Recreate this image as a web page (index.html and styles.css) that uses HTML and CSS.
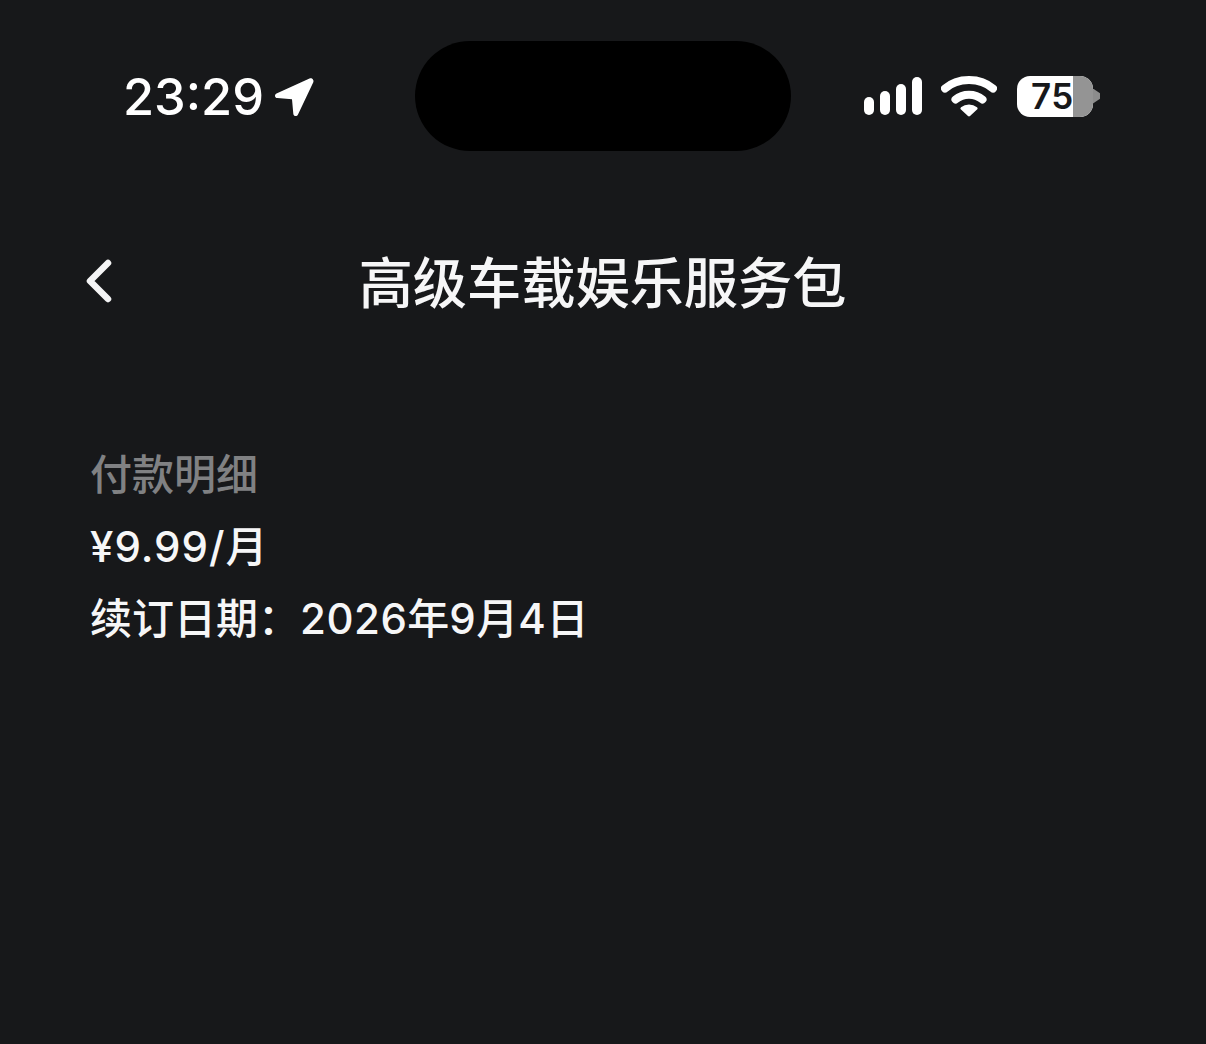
FILE: index.html
```html
<!DOCTYPE html>
<html lang="zh-CN">
<head>
<meta charset="utf-8">
<title>高级车载娱乐服务包</title>
<link rel="stylesheet" href="styles.css">
</head>
<body>
<div class="screen">
  <header class="status">
    <div class="status-left">
      <span class="time">23:29</span>
      <svg class="loc" width="42" height="42" viewBox="0 0 42 42"><path d="M36.500 2.500 3.500 17.500c-2.400 1.100-1.800 4.400.8 4.600l14.700 1.100 1.300 14.500c.2 2.600 3.600 3.200 4.700.8L40.300 6.300c1-2.400-1.500-4.900-3.800-3.800Z" fill="#fff"/></svg>
    </div>
    <div class="island"></div>
    <div class="status-right">
      <svg class="signal" width="58" height="38" viewBox="0 0 58 38"><rect x="0" y="20" width="10" height="18" rx="5"/><rect x="16" y="14" width="10" height="24" rx="5"/><rect x="32" y="7" width="10" height="31" rx="5"/><rect x="48" y="0" width="10" height="38" rx="5"/></svg>
      <svg class="wifi" width="56" height="42" viewBox="0 0 56 42"><path d="M4 13.500C16.500 2 39.500 2 52 13.500" /><path d="M14.500 24.500C22 18 34 18 41.500 24.500"/><path class="wifi-dot" d="M21 33.500C25 30 31 30 35 33.500L28 40Z"/></svg>
      <div class="battery">
        <div class="battery-body"><span class="battery-num">75</span><span class="battery-rest"></span></div>
        <span class="battery-cap"></span>
      </div>
    </div>
  </header>
  <nav class="navbar">
    <svg class="back" width="30" height="46" viewBox="0 0 30 46"><path d="M24 5 6 23l18 18" fill="none" stroke="#f4f4f5" stroke-width="6.500" stroke-linecap="round" stroke-linejoin="round"/></svg>
    <h1 class="title">高级车载娱乐服务包</h1>
  </nav>
  <main class="details">
    <p class="label">付款明细</p>
    <p class="line"><span class="num price">¥9.99/</span>月</p>
    <p class="line">续订日期：<span class="num">2026</span>年<span class="num">9</span>月<span class="num">4</span>日</p>
  </main>
</div>
</body>
</html>
```
FILE: styles.css
```css
* { box-sizing: border-box; }
html, body { margin: 0; padding: 0; }
body {
  width: 1206px;
  height: 1044px;
  overflow: hidden;
  background: #17181a;
  color: #f6f6f7;
  font-family: Inter, "Noto Sans CJK SC", "Liberation Sans", sans-serif;
}
.screen { display: flex; flex-direction: column; height: 1044px; }
.status {
  display: flex;
  align-items: center;
  height: 110px;
  margin-top: 41px;
  padding-left: 123px;
}
.status-left { display: flex; align-items: center; width: 292px; gap: 9px; }
.time { font-size: 50.500px; font-weight: 550; line-height: 56px; color: #fff; position: relative; top: 1px; }
.loc { flex: none; margin-top: 2px; margin-left: 0; }
.island { width: 376px; height: 110px; border-radius: 55px; background: #000; flex: none; }
.status-right { display: flex; align-items: center; margin-left: 73px; }
.signal { fill: #fff; flex: none; }
.wifi { flex: none; margin-left: 19px; margin-right: 20px; fill: none; stroke: #fff; stroke-width: 8; stroke-linecap: round; }
.wifi .wifi-dot { fill: #fff; stroke: #fff; stroke-width: 3; stroke-linejoin: round; }
.battery { display: flex; align-items: center; }
.battery-body {
  position: relative;
  display: flex;
  align-items: center;
  width: 76px;
  height: 41px;
  border-radius: 13px;
  overflow: hidden;
  background: #fff;
}
.battery-num { position: relative; z-index: 1; margin-left: 14px; font-size: 35px; font-weight: 600; letter-spacing: .5px; line-height: 41px; color: #17181a; }
.battery-rest { position: absolute; top: 0; right: 0; bottom: 0; width: 20px; background: #949494; }
.battery-cap { width: 7px; height: 15px; background: #8c8c8c; clip-path: polygon(0 0, 100% 32%, 100% 68%, 0 100%); }
.navbar {
  display: flex;
  position: relative;
  justify-content: center;
  align-items: center;
  margin-top: 96px;
  height: 72px;
}
.back { position: absolute; left: 84px; top: 11px; }
.title { margin: 0 0 0 -1px; font-size: 54.200px; line-height: 72px; font-weight: 500; color: #f6f6f7; }
.details { padding: 120px 0 0 90px; }
.label, .line { margin: 0; font-size: 42px; line-height: 72px; white-space: nowrap; }
.label { color: #808183; font-weight: 500; }
.line { font-weight: 500; color: #f6f6f7; }
.num { font-weight: 550; letter-spacing: .5px; }
.price { letter-spacing: 1px; }
```
